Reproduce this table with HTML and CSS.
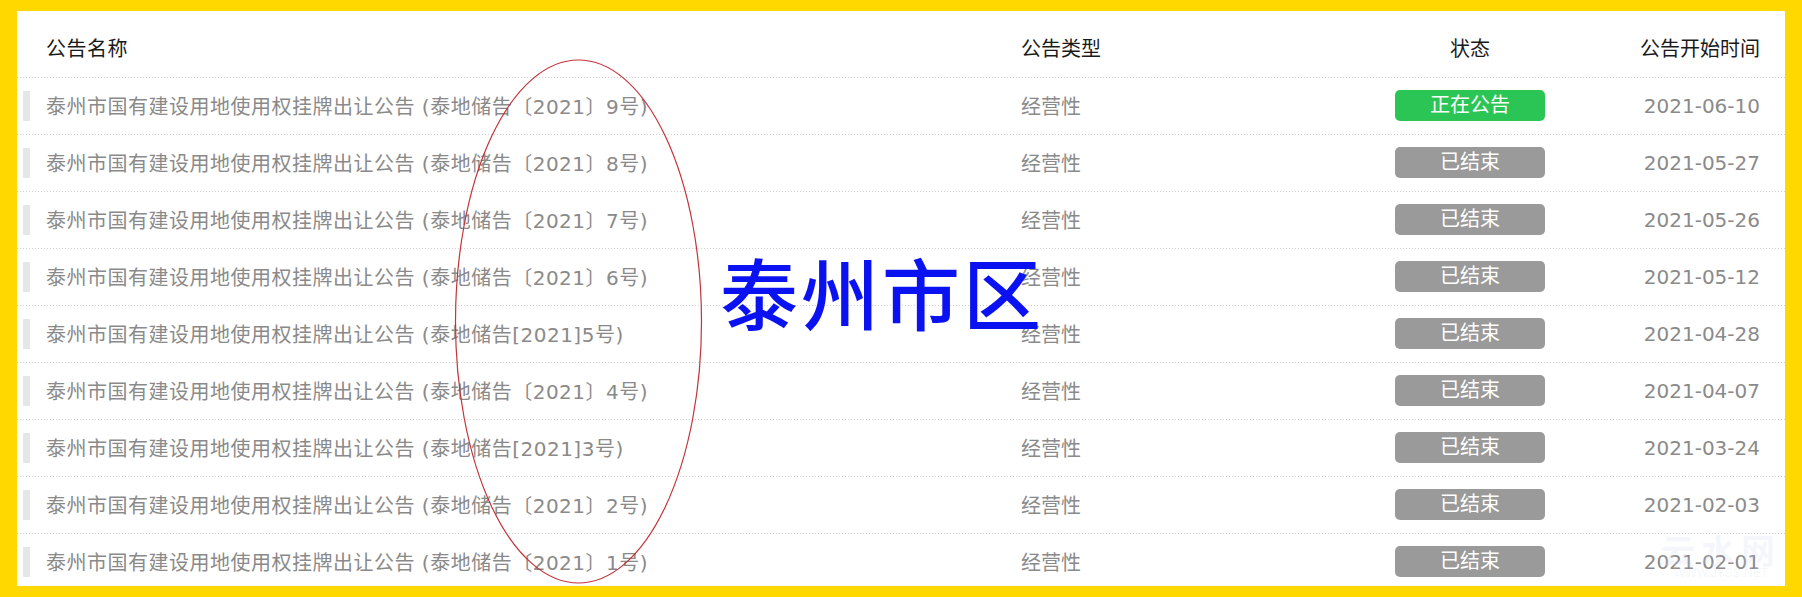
FILE: index.html
```html
<!DOCTYPE html>
<html lang="zh-CN">
<head>
<meta charset="utf-8">
<title>公告列表</title>
<link rel="stylesheet" href="styles.css">
</head>
<body>
<div class="page">
  <div class="panel">
    <div class="row head">
      <span></span><span></span>
      <span class="c-name">公告名称</span>
      <span class="c-type">公告类型</span>
      <span class="c-status">状态</span>
      <span class="c-date">公告开始时间</span>
    </div>
    <div class="row"><i class="bar"></i><span></span><span class="c-name">泰州市国有建设用地使用权挂牌出让公告 (泰地储告〔2021〕9号)</span><span class="c-type">经营性</span><span class="c-status"><b class="badge on">正在公告</b></span><span class="c-date">2021-06-10</span></div>
    <div class="row"><i class="bar"></i><span></span><span class="c-name">泰州市国有建设用地使用权挂牌出让公告 (泰地储告〔2021〕8号)</span><span class="c-type">经营性</span><span class="c-status"><b class="badge">已结束</b></span><span class="c-date">2021-05-27</span></div>
    <div class="row"><i class="bar"></i><span></span><span class="c-name">泰州市国有建设用地使用权挂牌出让公告 (泰地储告〔2021〕7号)</span><span class="c-type">经营性</span><span class="c-status"><b class="badge">已结束</b></span><span class="c-date">2021-05-26</span></div>
    <div class="row"><i class="bar"></i><span></span><span class="c-name">泰州市国有建设用地使用权挂牌出让公告 (泰地储告〔2021〕6号)</span><span class="c-type">经营性</span><span class="c-status"><b class="badge">已结束</b></span><span class="c-date">2021-05-12</span></div>
    <div class="row"><i class="bar"></i><span></span><span class="c-name">泰州市国有建设用地使用权挂牌出让公告 (泰地储告[2021]5号)</span><span class="c-type">经营性</span><span class="c-status"><b class="badge">已结束</b></span><span class="c-date">2021-04-28</span></div>
    <div class="row"><i class="bar"></i><span></span><span class="c-name">泰州市国有建设用地使用权挂牌出让公告 (泰地储告〔2021〕4号)</span><span class="c-type">经营性</span><span class="c-status"><b class="badge">已结束</b></span><span class="c-date">2021-04-07</span></div>
    <div class="row"><i class="bar"></i><span></span><span class="c-name">泰州市国有建设用地使用权挂牌出让公告 (泰地储告[2021]3号)</span><span class="c-type">经营性</span><span class="c-status"><b class="badge">已结束</b></span><span class="c-date">2021-03-24</span></div>
    <div class="row"><i class="bar"></i><span></span><span class="c-name">泰州市国有建设用地使用权挂牌出让公告 (泰地储告〔2021〕2号)</span><span class="c-type">经营性</span><span class="c-status"><b class="badge">已结束</b></span><span class="c-date">2021-02-03</span></div>
    <div class="row"><i class="bar"></i><span></span><span class="c-name">泰州市国有建设用地使用权挂牌出让公告 (泰地储告〔2021〕1号)</span><span class="c-type">经营性</span><span class="c-status"><b class="badge">已结束</b></span><span class="c-date">2021-02-01</span></div>
  </div>
  <div class="watermark"><span class="wm-big">云水网</span><span class="wm-small">WWW.JYSS.NET</span></div>
  <svg class="ellipse" width="250" height="528" viewBox="0 0 250 528"><ellipse cx="124.5" cy="263.5" rx="123" ry="261.5" fill="none" stroke="#c4333a" stroke-width="1.2"/></svg>
  <div class="stamp">泰州市区</div>
</div>
</body>
</html>
```
FILE: styles.css
```css
html, body {
  margin: 0;
  padding: 0;
}
body {
  background: #ffd800;
  font-family: "DejaVu Sans", "Noto Sans CJK SC", sans-serif;
  font-size: 20px;
}
.page {
  position: relative;
  width: 1802px;
  height: 597px;
  box-sizing: border-box;
  padding: 11px 17px;
}
.panel {
  background: #fff;
  height: 575px;
  overflow: hidden;
}
.row {
  display: grid;
  grid-template-columns: 7px 16px 975px 374px 150px 215px;
  align-items: center;
  padding: 0 25px 0 6px;
  height: 57px;
  color: #8a8a8a;
  background-image: linear-gradient(to right, #d2d2d2 0 1px, transparent 1px);
  background-size: 3px 1px;
  background-repeat: repeat-x;
  background-position: 0 0;
}
.row.head {
  height: 66px;
  background: none;
  color: #1a1a1a;
  padding-top: 6px;
  box-sizing: border-box;
}
.bar {
  display: block;
  width: 7px;
  height: 30px;
  background: #e6e6e6;
}
.c-name, .c-type {
  white-space: nowrap;
}
.row .c-name {
  letter-spacing: 0.5px;
}
.row.head .c-name {
  letter-spacing: 0.5px;
}
.c-status {
  text-align: center;
}
.c-date {
  text-align: right;
  white-space: nowrap;
}
.badge {
  display: block;
  font-weight: normal;
  height: 31px;
  line-height: 31px;
  border-radius: 5px;
  background: #9a9a9a;
  color: #fff;
  text-align: center;
}
.badge.on {
  background: #2bc556;
}
.ellipse {
  position: absolute;
  left: 454px;
  top: 58px;
}
.stamp {
  position: absolute;
  left: 720px;
  top: 246px;
  font-family: "Noto Sans CJK SC", sans-serif;
  font-weight: 500;
  font-size: 78px;
  line-height: 90px;
  letter-spacing: 3px;
  color: #0a12f2;
  white-space: nowrap;
}
.watermark {
  position: absolute;
  left: 1658px;
  top: 534px;
  width: 126px;
  display: flex;
  flex-direction: column;
  align-items: center;
  color: rgba(205, 215, 238, 0.22);
  line-height: 1;
}
.wm-big {
  font-family: "Noto Sans CJK SC", sans-serif;
  font-size: 34px;
  line-height: 32px;
  font-weight: 700;
  letter-spacing: 6px;
}
.wm-small {
  font-family: "Liberation Sans", sans-serif;
  font-size: 12px;
  line-height: 13px;
  margin-top: 1px;
}
```
